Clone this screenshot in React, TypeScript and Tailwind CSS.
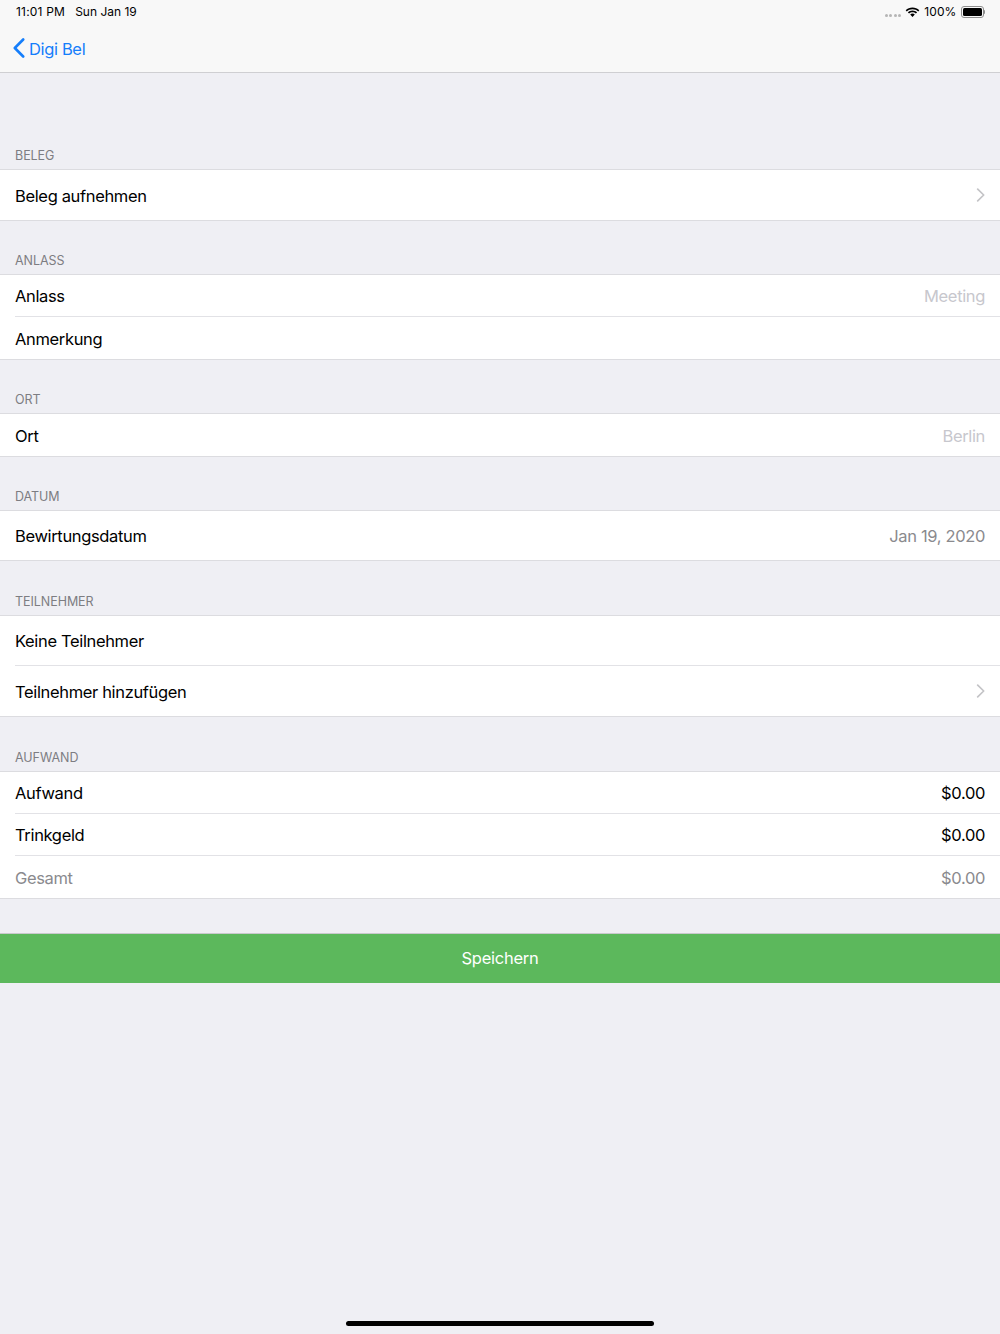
import { ReactNode } from "react";

function Chevron() {
    return (
        <svg width="9" height="14" viewBox="0 0 9 14" fill="none" className="ml-auto">
            <path d="M1.700 1.200l6 5.800-6 5.800" stroke="#c4c4c7" strokeWidth="1.700" strokeLinecap="round" strokeLinejoin="round" />
        </svg>
    );
}

function Row({ label, height, last, muted, children }: { label: string; height: string; last?: boolean; muted?: boolean; children?: ReactNode }) {
    return (
        <div className={`${height} pl-[15px]`}>
            <div className={`h-full flex items-center pr-[15px] ${last ? "" : "border-b border-[#e2e2e6]"}`}>
                <span className={`pt-[2px] text-[16.5px] tracking-[-0.35px] ${muted ? "text-[#8a8a8e]" : "text-black"}`}>{label}</span>
                {children}
            </div>
        </div>
    );
}

function Value({ color, children }: { color: string; children: ReactNode }) {
    return <span className={`ml-auto pt-[2px] text-[16.5px] tracking-[-0.35px] ${color}`}>{children}</span>;
}

function Section({ title, height, children }: { title: string; height: string; children: ReactNode }) {
    return (
        <section>
            <div className={`${height} flex items-end pl-[15px] pb-[6px]`}>
                <span className="text-[12.500px] tracking-[-0.05px] leading-[15px] text-[#7d7d82]">{title}</span>
            </div>
            <div className="bg-white border-y border-[#dcdce0]">{children}</div>
        </section>
    );
}

export default function App() {
    return (
        <div className="w-[1000px] h-[1334px] overflow-hidden relative bg-[#efeff4] font-['Inter','Liberation_Sans',sans-serif]">
            <header className="h-[73px] bg-[#f8f8f8] border-b border-[#cfcfd2]">
                <div className="h-[24px] flex items-center pl-4 pr-[15px] text-[12px] text-black">
                    <span className="tracking-[0.2px]">11:01 PM</span>
                    <span className="ml-[10px]">Sun Jan 19</span>
                    <div className="ml-auto flex items-center">
                        <div className="flex gap-[1.500px] mt-[7px] mr-[2px]">
                            <i className="w-[3px] h-[3px] rounded-full bg-[#b5b5b5]" />
                            <i className="w-[3px] h-[3px] rounded-full bg-[#b5b5b5]" />
                            <i className="w-[3px] h-[3px] rounded-full bg-[#b5b5b5]" />
                            <i className="w-[3px] h-[3px] rounded-full bg-[#b5b5b5]" />
                        </div>
                        <svg width="15" height="11" viewBox="0 0 15 11" className="ml-[2px]">
                            <path d="M7.5 2.2c2.2 0 4.2.8 5.7 2.2l1.1-1.2C12.5 1.400 10.100.4 7.500.4S2.500 1.400.700 3.200l1.100 1.200C3.300 3 5.300 2.200 7.500 2.200z" fill="#000" />
                            <path d="M7.500 5.300c1.300 0 2.500.5 3.400 1.300l1.200-1.200C10.900 4.200 9.300 3.500 7.500 3.500s-3.400.7-4.600 1.900l1.200 1.200c.9-.8 2.100-1.300 3.400-1.300z" fill="#000" />
                            <path d="M7.500 6.600c-.9 0-1.700.4-2.300.9l2.300 2.400 2.300-2.400c-.6-.5-1.400-.9-2.300-.9z" fill="#000" />
                        </svg>
                        <span className="ml-[4px] tracking-[0.1px]">100%</span>
                        <div className="ml-[4px] flex items-center">
                            <div className="w-[23px] h-[12px] rounded-[3px] border border-[#8e8e8e] p-[1px]">
                                <div className="w-full h-full rounded-[1.500px] bg-black" />
                            </div>
                            <div className="w-[1.500px] h-[4px] rounded-r-sm bg-[#8e8e8e]" />
                        </div>
                    </div>
                </div>
                <div className="h-[48px] flex items-center pl-[13px]">
                    <svg width="12" height="20" viewBox="0 0 12 20" fill="none">
                        <path d="M10.200 1.500L1.800 10l8.400 8.500" stroke="#157efb" strokeWidth="2.600" strokeLinecap="round" strokeLinejoin="round" />
                    </svg>
                    <span className="ml-[4px] pt-[2px] text-[16.500px] tracking-[-0.35px] text-[#157efb]">Digi Bel</span>
                </div>
            </header>

            <main>
                <Section title="BELEG" height="h-[96px]">
                    <Row label="Beleg aufnehmen" height="h-[50px]" last>
                        <Chevron />
                    </Row>
                </Section>
                <Section title="ANLASS" height="h-[53px]">
                    <Row label="Anlass" height="h-[42px]">
                        <Value color="text-[#c7c7cd]">Meeting</Value>
                    </Row>
                    <Row label="Anmerkung" height="h-[42px]" last />
                </Section>
                <Section title="ORT" height="h-[53px]">
                    <Row label="Ort" height="h-[42px]" last>
                        <Value color="text-[#c7c7cd]">Berlin</Value>
                    </Row>
                </Section>
                <Section title="DATUM" height="h-[53px]">
                    <Row label="Bewirtungsdatum" height="h-[49px]" last>
                        <Value color="text-[#8a8a8e]">Jan 19, 2020</Value>
                    </Row>
                </Section>
                <Section title="TEILNEHMER" height="h-[54px]">
                    <Row label="Keine Teilnehmer" height="h-[50px]" />
                    <Row label="Teilnehmer hinzufügen" height="h-[50px]" last>
                        <Chevron />
                    </Row>
                </Section>
                <Section title="AUFWAND" height="h-[54px]">
                    <Row label="Aufwand" height="h-[42px]">
                        <Value color="text-black">$0.00</Value>
                    </Row>
                    <Row label="Trinkgeld" height="h-[42px]">
                        <Value color="text-black">$0.00</Value>
                    </Row>
                    <Row label="Gesamt" height="h-[42px]" muted last>
                        <Value color="text-[#8a8a8e]">$0.00</Value>
                    </Row>
                </Section>

                <button className="mt-[34px] w-full h-[50px] bg-[#5cb85c] border-t border-[#c9c9cc] text-[16.500px] tracking-[-0.25px] text-white">
                    Speichern
                </button>
            </main>

            <div className="absolute left-[346px] bottom-[8px] w-[308px] h-[5px] rounded-full bg-black" />
        </div>
    );
}
